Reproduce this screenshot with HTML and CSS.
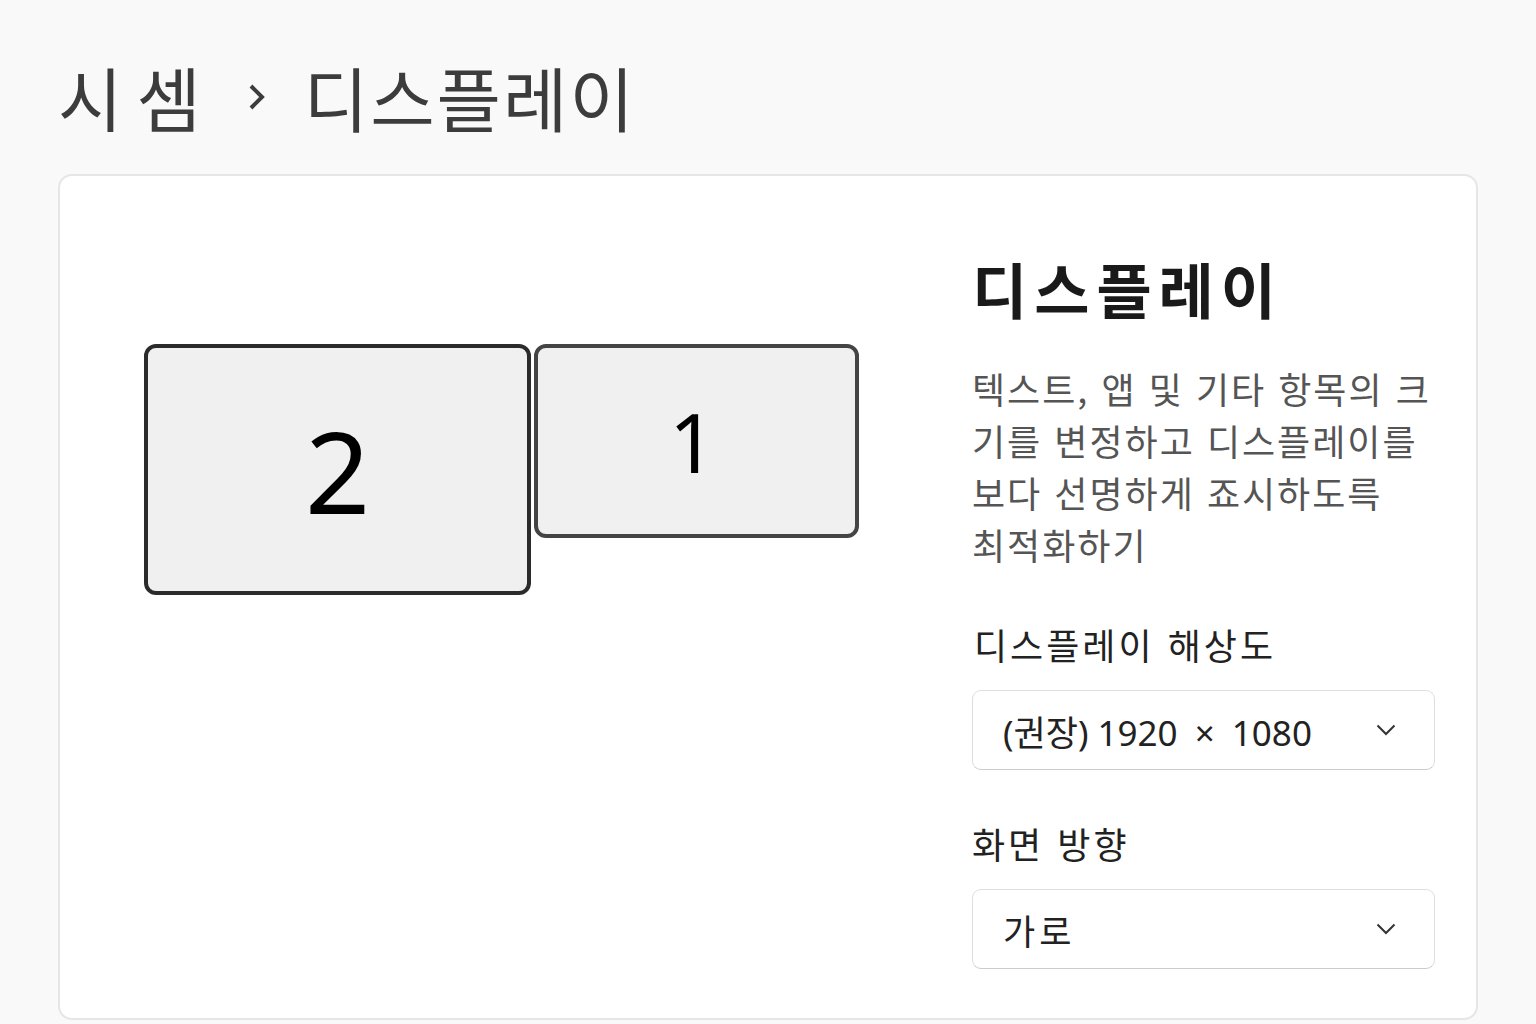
FILE: index.html
```html
<!DOCTYPE html>
<html lang="ko">
<head>
    <meta charset="UTF-8">
    <title>디스플레이</title>
    <link rel="stylesheet" href="styles.css">
</head>
<body>
    <div class="breadcrumb">
        <span class="crumb crumb-parent">시셈</span>
        <svg class="crumb-sep" width="20" height="28" viewBox="0 0 20 28">
            <path d="M4 3 L15 14 L4 25" fill="none" stroke="#3c3c3c" stroke-width="4"/>
        </svg>
        <span class="crumb">디스플레이</span>
    </div>

    <div class="card">
        <!-- 모니터 배치 -->
        <div class="monitors">
            <div class="monitor monitor-big">2</div>
            <div class="monitor monitor-small">1</div>
        </div>

        <div class="settings">
            <h2 class="title">디스플레이</h2>
            <p class="desc">텍스트, 앱 및 기타 항목의 크<br>기를 변정하고 디스플레이를<br>보다 선명하게 죠시하도륵<br>최적화하기</p>

            <div class="label">디스플레이 해상도</div>
            <div class="dropdown">
                <span>(권장) 1920 <span class="times">&times;</span> 1080</span>
                <svg class="chev" width="20" height="12" viewBox="0 0 20 12">
                    <path d="M1.5 1.5 L10 10 L18.5 1.5" fill="none" stroke="#333" stroke-width="2"/>
                </svg>
            </div>

            <div class="label label-second">화면 방향</div>
            <div class="dropdown">
                <span class="dropdown-kr">가로</span>
                <svg class="chev" width="20" height="12" viewBox="0 0 20 12">
                    <path d="M1.5 1.5 L10 10 L18.5 1.5" fill="none" stroke="#333" stroke-width="2"/>
                </svg>
            </div>
        </div>
    </div>
</body>
</html>
```

FILE: styles.css
```css
body {
    margin: 0;
    padding: 0 58px;
    background-color: #f9f9f9;
    font-family: "Noto Sans CJK KR", "Noto Sans", sans-serif;
    color: #222;
}
.breadcrumb {
    display: flex;
    align-items: center;
    height: 174px;
    box-sizing: border-box;
    padding-top: 20px;
}
.crumb {
    font-size: 70px;
    line-height: 1;
    color: #3c3c3c;
    letter-spacing: 2px;
}
.crumb-parent {
    letter-spacing: 14px;
}
.crumb-sep {
    margin: 0 37px 0 32px;
}
.card {
    display: flex;
    background-color: #fff;
    border: 2px solid #e6e6e6;
    border-radius: 14px;
    height: 846px;
    box-sizing: border-box;
}
.monitors {
    display: flex;
    align-items: flex-start;
    gap: 3px;
    padding: 168px 0 0 84px;
    width: 830px;
    box-sizing: border-box;
}
.monitor {
    display: flex;
    align-items: center;
    justify-content: center;
    box-sizing: border-box;
    background-color: #f0f0f0;
    border-radius: 12px;
    font-family: "Noto Sans", sans-serif;
    color: #000;
    line-height: 1;
}
.monitor-big {
    width: 387px;
    height: 251px;
    border: 4px solid #2b2b2b;
    font-size: 114px;
}
.monitor-small {
    width: 325px;
    height: 194px;
    border: 4px solid #444;
    font-size: 82px;
    padding-right: 8px;
}
.settings {
    display: flex;
    flex-direction: column;
    width: 463px;
    margin-left: 82px;
    padding-top: 76px;
}
.title {
    margin: 0;
    font-size: 60px;
    line-height: 72px;
    font-weight: 700;
    color: #1a1a1a;
    letter-spacing: 7px;
}
.desc {
    margin: 38px 0 0 0;
    font-size: 36px;
    line-height: 52px;
    color: #555;
    letter-spacing: 2px;
    white-space: nowrap;
}
.label {
    margin-top: 50px;
    font-size: 36px;
    line-height: 48px;
    color: #222;
    padding-left: 2px;
    letter-spacing: 3px;
}
.label-second {
    margin-top: 49px;
    padding-left: 0;
}
.dropdown {
    display: flex;
    align-items: center;
    justify-content: space-between;
    margin-top: 22px;
    height: 80px;
    box-sizing: border-box;
    padding: 0 38px 0 30px;
    border: 1px solid #dedede;
    border-bottom-color: #cbcbcb;
    border-radius: 9px;
    font-family: "Noto Sans", "Noto Sans CJK KR", sans-serif;
    font-size: 35px;
    color: #222;
}
.times {
    margin: 0 8px;
}
.dropdown-kr {
    letter-spacing: 4px;
}
```
